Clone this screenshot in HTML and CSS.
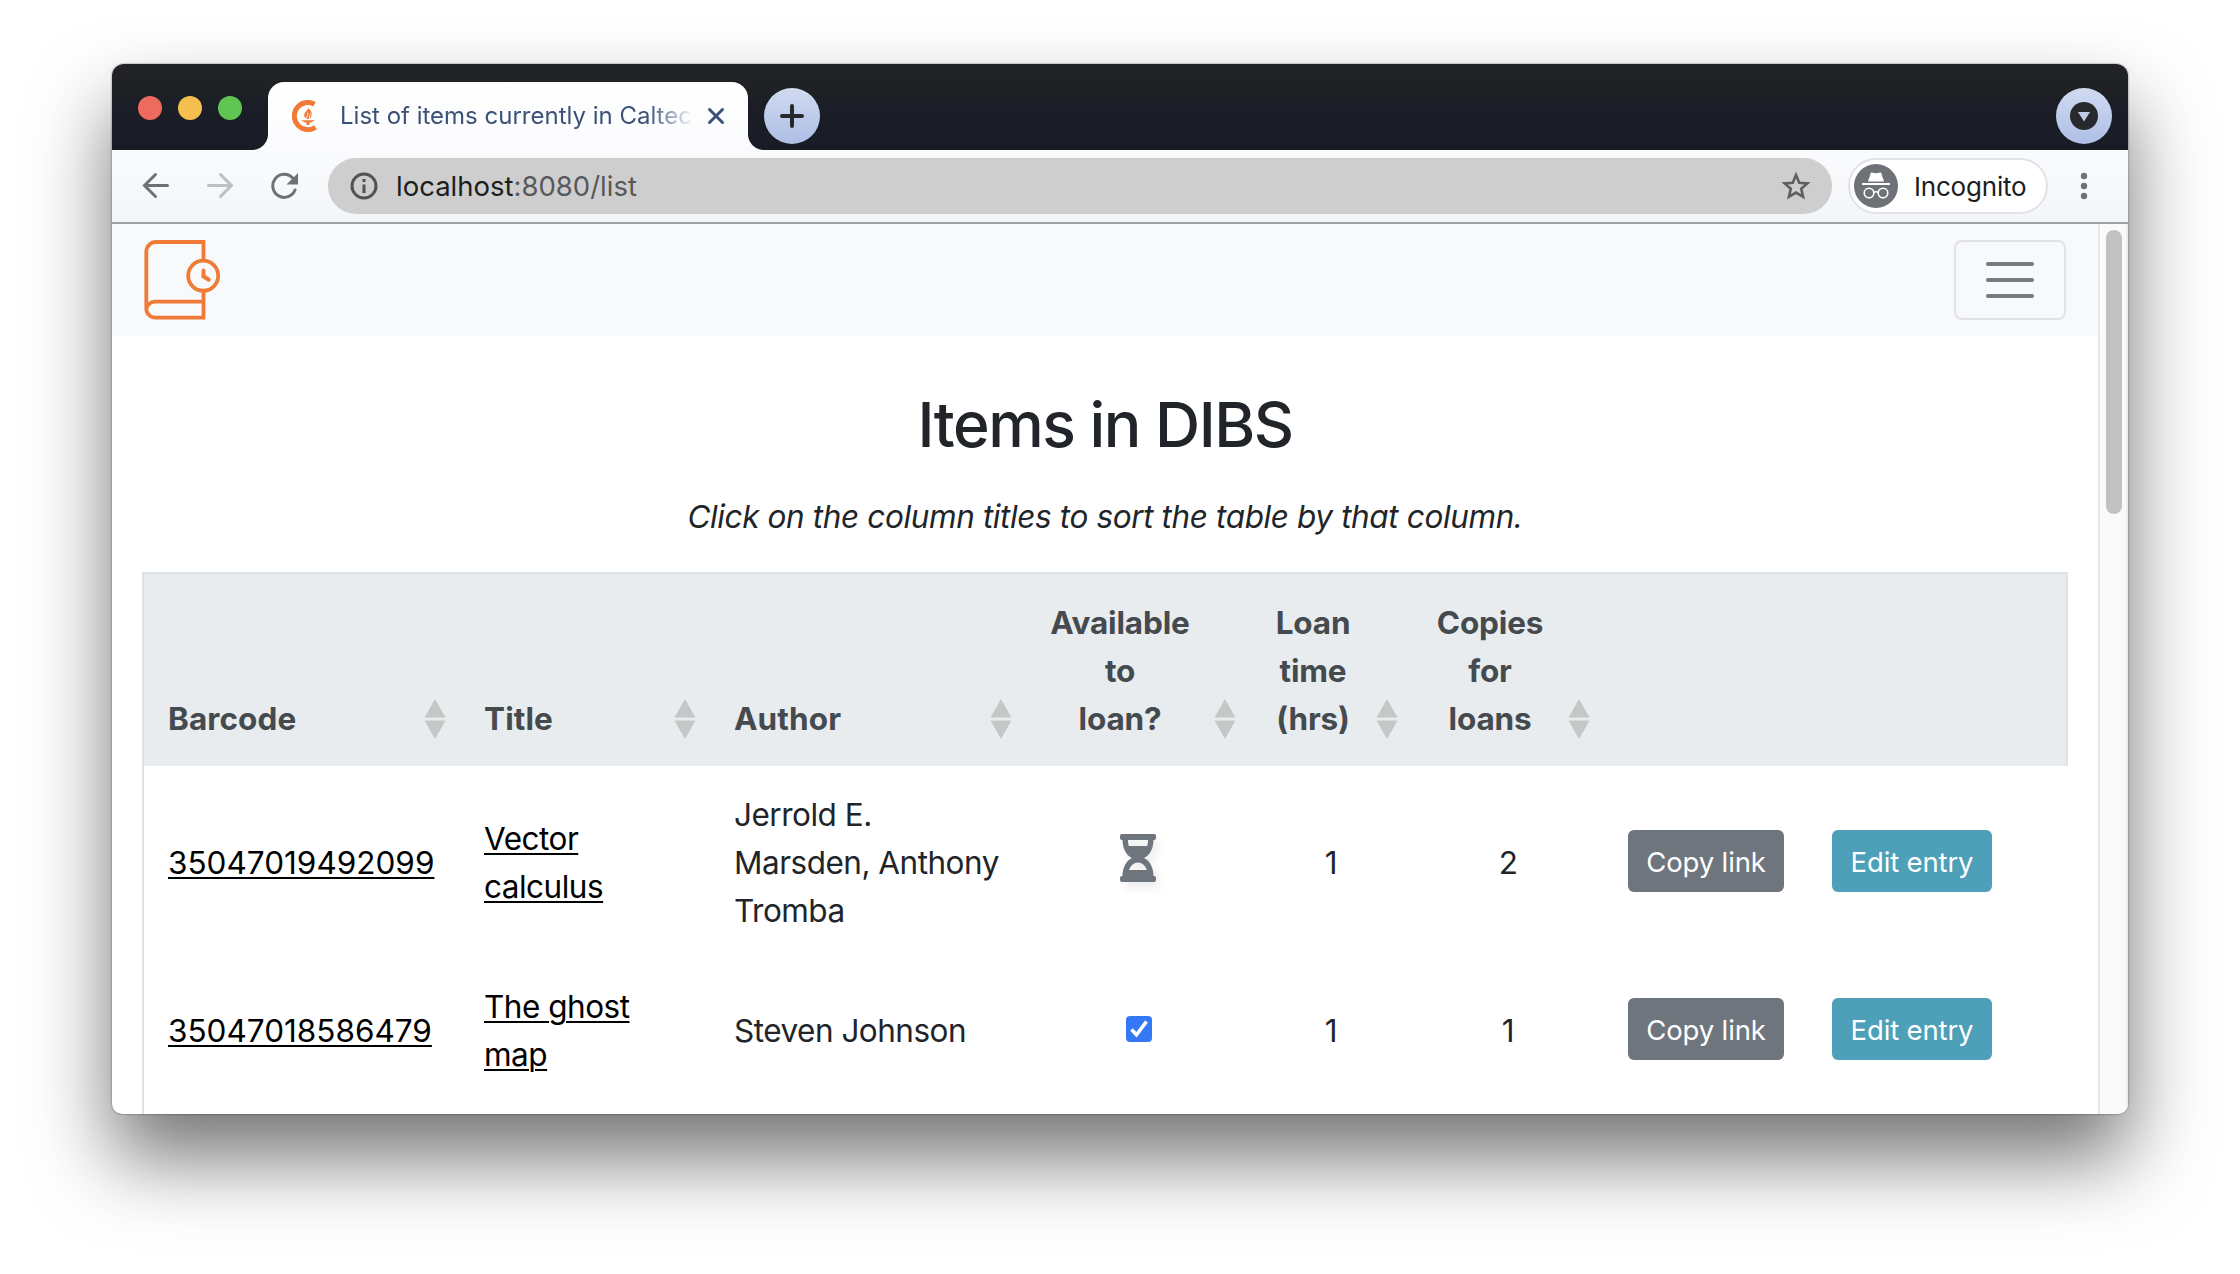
FILE: index.html
```html
<!DOCTYPE html>
<html lang="en">
<head>
<meta charset="utf-8">
<title>List of items currently in Caltech DIBS</title>
<link rel="stylesheet" href="styles.css">
</head>
<body>
<svg class="defs" width="0" height="0" aria-hidden="true">
  <symbol id="sort" viewBox="0 0 22 40"><path d="M11 0l10.500 18.500H.5zM11 40l10.500-18.500H.5z" fill="#c5c6c6"/></symbol>
</svg>
<div class="window">
  <div class="tabstrip">
    <div class="lights"><i class="red"></i><i class="yellow"></i><i class="green"></i></div>
    <div class="tab">
      <svg class="favicon" width="26" height="32" viewBox="0 0 26 32">
        <path d="M22.500 4.200A13.600 13.600 0 1 0 23.600 27.200" fill="none" stroke="#f07b37" stroke-width="5"/>
        <path d="M16.500 8c3.200 3 4 6 2.700 8.500-.8 1.500-1.700 2.200-3.200 2.700-3-.7-4.500-3-3.500-5.700.8-2 3-3 4-5.500z" fill="#f07b37"/>
        <path d="M9 20.300h14l-4 2.200h-1.500v2.500h-3v-2.500H13z" fill="#f07b37"/>
        <path d="M14.500 18.500l1.500-6M17 18.500l1.500-5" stroke="#fff" stroke-width=".8"/>
      </svg>
      <span class="tab-title">List of items currently in Caltec</span>
      <svg class="close" width="20" height="20" viewBox="0 0 20 20"><path d="M3.500 3.500l13 13M16.500 3.500l-13 13" stroke="#3c5178" stroke-width="3" stroke-linecap="round"/></svg>
    </div>
    <div class="round"><svg width="24" height="24" viewBox="0 0 24 24"><path d="M2 12h20M12 2v20" stroke="#28292c" stroke-width="4" stroke-linecap="round"/></svg></div>
    <div class="round last"><svg width="28" height="28" viewBox="0 0 28 28"><circle cx="14" cy="14" r="14" fill="#28292c"/><path d="M8 10h12l-6 9.500z" fill="#bfcbe8"/></svg></div>
  </div>
  <div class="toolbar">
    <svg class="nav-icon" width="28" height="28" viewBox="0 0 28 28"><path d="M25.500 13.500H3M13.500 2.500L2.500 13.500l11 11" fill="none" stroke="#6e7277" stroke-width="3" stroke-linecap="round"/></svg>
    <svg class="nav-icon" width="28" height="28" viewBox="0 0 28 28"><path d="M2.500 13.500h23M14.500 2.500l11 11-11 11" fill="none" stroke="#bcbfc3" stroke-width="3" stroke-linecap="round"/></svg>
    <svg class="nav-icon" width="28" height="28" viewBox="0 0 28 28"><path d="M22.500 5.800A11.500 11.500 0 1 0 25 18" fill="none" stroke="#6e7277" stroke-width="3" stroke-linecap="round"/><path d="M28 1v11.500H16.500z" fill="#6e7277"/></svg>
    <div class="omnibox">
      <svg width="28" height="28" viewBox="0 0 28 28"><circle cx="14" cy="14" r="12" fill="none" stroke="#525355" stroke-width="3"/><path d="M14 12.500V21M14 7v3" stroke="#525355" stroke-width="3"/></svg>
      <span class="url">localhost<span class="rest">:8080/list</span></span>
      <svg class="star" width="30" height="30" viewBox="0 0 30 30"><path d="M15 4l3.200 7.700 8.200.700-6.200 5.400 1.900 8.100-7.100-4.300-7.100 4.300 1.900-8.100-6.200-5.400 8.200-.7z" fill="none" stroke="#5f6062" stroke-width="2.600"/></svg>
    </div>
    <div class="incognito">
      <svg width="44" height="44" viewBox="0 0 44 44"><circle cx="22" cy="22" r="22" fill="#6e7277"/><path d="M14 17.500l2.700-8.300q.3-.9 1.300-.6 4 1.400 8 0 1-.3 1.300.6L30 17.500z" fill="#fff"/><path d="M8 20h28" stroke="#fff" stroke-width="1.800"/><g fill="none" stroke="#fff" stroke-width="1.600"><circle cx="15" cy="29" r="4.800"/><circle cx="29" cy="29" r="4.800"/><path d="M19.500 28.500q2.500-1.500 5 0"/></g></svg>
      <span class="inc">Incognito</span>
    </div>
    <svg class="kebab" width="8" height="28" viewBox="0 0 8 28"><g fill="#6e7277"><circle cx="4" cy="4" r="3.200"/><circle cx="4" cy="14" r="3.200"/><circle cx="4" cy="24" r="3.200"/></g></svg>
  </div>
  <div class="viewport">
    <div class="page">
      <nav class="navbar">
        <svg width="78" height="80" viewBox="0 0 78 80"><g fill="none" stroke="#f07b37" stroke-width="3.800"><path d="M59.500 20V2H12A9.700 9.700 0 0 0 2.300 11.700V68.500A9.200 9.200 0 0 0 11.500 77.700H59.500V51M2.300 70A8.500 8.500 0 0 1 10.800 61.700H59.500"/><circle cx="59.200" cy="35.700" r="15"/><path d="M59.500 30.500V36.300L64.800 39.700" stroke-width="4" stroke-linecap="round"/></g></svg>
        <div class="toggler"><i></i><i></i><i></i></div>
      </nav>
      <h1>Items in DIBS</h1>
      <p class="hint">Click on the column titles to sort the table by that column.</p>
      <div class="table-wrap">
        <table>
          <colgroup><col class="c1"><col class="c2"><col class="c3"><col class="c4"><col class="c5"><col class="c6"><col class="c7"><col class="c8"></colgroup>
          <thead>
            <tr>
              <th><div class="sort"><span>Barcode</span><svg width="22" height="40"><use href="#sort"/></svg></div></th>
              <th><div class="sort"><span>Title</span><svg width="22" height="40"><use href="#sort"/></svg></div></th>
              <th><div class="sort"><span>Author</span><svg width="22" height="40"><use href="#sort"/></svg></div></th>
              <th><div class="sort center"><span>Available<br>to<br>loan?</span><svg width="22" height="40"><use href="#sort"/></svg></div></th>
              <th><div class="sort center"><span>Loan<br>time<br>(hrs)</span><svg width="22" height="40"><use href="#sort"/></svg></div></th>
              <th><div class="sort center"><span>Copies<br>for<br>loans</span><svg width="22" height="40"><use href="#sort"/></svg></div></th>
              <th></th>
              <th></th>
            </tr>
          </thead>
          <tbody>
            <tr>
              <td class="code"><a>35047019492099</a></td>
              <td><a>Vector<br>calculus</a></td>
              <td>Jerrold E.<br>Marsden, Anthony<br>Tromba</td>
              <td class="mid"><svg class="hourglass" width="36" height="48" viewBox="0 0 36 48"><path fill="#6e757d" fill-rule="evenodd" d="M2 0h32a2 2 0 0 1 2 2v2a2 2 0 0 1-2 2h-.5c0 8-3.500 15.500-9.500 18 6 2.500 9.500 10 9.500 18h.5a2 2 0 0 1 2 2v2a2 2 0 0 1-2 2H2a2 2 0 0 1-2-2v-2a2 2 0 0 1 2-2h.5c0-8 3.500-15.500 9.500-18C6 21.500 2.500 14 2.500 6H2a2 2 0 0 1-2-2V2a2 2 0 0 1 2-2zM8 6c0 2.200.3 4.200.8 6h18.400c.5-1.800.8-3.800.8-6zM9 36h18c-1.700-4.500-5-7.500-9-7.500s-7.300 3-9 7.500z"/></svg></td>
              <td class="mid">1</td>
              <td class="mid">2</td>
              <td><span class="btn copy">Copy link</span></td>
              <td><span class="btn edit">Edit entry</span></td>
            </tr>
            <tr>
              <td class="code"><a>35047018586479</a></td>
              <td><a>The ghost<br>map</a></td>
              <td>Steven Johnson</td>
              <td class="mid"><svg class="check" width="26" height="26" viewBox="0 0 26 26"><rect width="26" height="26" rx="4" fill="#3478f6"/><path d="M5.500 13.500l5 5.300L20.500 5.500" fill="none" stroke="#fff" stroke-width="3.600"/></svg></td>
              <td class="mid">1</td>
              <td class="mid">1</td>
              <td><span class="btn copy">Copy link</span></td>
              <td><span class="btn edit">Edit entry</span></td>
            </tr>
          </tbody>
        </table>
      </div>
    </div>
    <div class="scrollbar"><i></i></div>
  </div>
</div>
</body>
</html>
```
FILE: styles.css
```css
* { box-sizing: border-box; }
body { margin: 0; height: 1274px; overflow: hidden; background: #fff; font-family: Inter, "Liberation Sans", sans-serif; color: #212529; padding: 64px 112px; }
svg { display: block; flex: none; }
.defs { position: absolute; }

/* window and tab strip */
.window { width: 2016px; height: 1050px; border-radius: 12px 12px 10px 10px; overflow: hidden; background: #fff; box-shadow: 0 0 2px rgba(0,0,0,.6), 0 44px 80px rgba(0,0,0,.55); display: flex; flex-direction: column; }
.tabstrip { height: 86px; background: linear-gradient(#212225, #1f2124 28%, #1b1e26 45%, #191c25); display: flex; align-items: flex-start; flex: none; }
.lights { display: flex; gap: 16px; padding: 32px 0 0 26px; width: 156px; }
.lights i { width: 24px; height: 24px; border-radius: 50%; }
.red { background: #ed6a5e; }
.yellow { background: #f5bf4f; }
.green { background: #61c554; }
.tab { position: relative; margin-top: 18px; width: 480px; height: 68px; border-radius: 16px 16px 0 0; background: linear-gradient(#fff, #fafbfd); display: flex; align-items: center; padding-left: 24px; }
.tab::before, .tab::after { content: ""; position: absolute; bottom: 0; width: 16px; height: 16px; }
.tab::before { left: -16px; background: radial-gradient(circle at 0 0, transparent 15.5px, #fafbfd 16.5px); }
.tab::after { right: -16px; background: radial-gradient(circle at 100% 0, transparent 15.5px, #fafbfd 16.5px); }
.tab-title { font-size: 24px; line-height: 30px; color: #3c5178; margin: 0 14px 0 22px; width: 352px; white-space: nowrap; overflow: hidden; -webkit-mask-image: linear-gradient(90deg, #000 308px, transparent 354px); mask-image: linear-gradient(90deg, #000 308px, transparent 354px); }
.round { width: 56px; height: 56px; border-radius: 50%; margin: 24px 0 0 16px; background: linear-gradient(#d0dbf1, #aebfe5); display: flex; align-items: center; justify-content: center; }
.last { margin-left: auto; margin-right: 16px; }

/* toolbar */
.toolbar { height: 74px; border-bottom: 2px solid #a0a1a3; background: linear-gradient(#fafbfd, #f3f6f9); display: flex; align-items: center; padding-left: 30px; flex: none; }
.nav-icon { margin-right: 36px; }
.omnibox { width: 1504px; height: 56px; border-radius: 28px; background: #cecece; margin-left: -6px; display: flex; align-items: center; padding: 0 21px 0 22px; }
.url { font-size: 27.5px; margin-left: 18px; color: #1c1d1f; white-space: nowrap; }
.rest { color: #57585a; }
.star { margin-left: auto; }
.incognito { margin-left: 16px; width: 200px; height: 56px; border: 2px solid #e0e2e5; border-radius: 28px; background: #fff; display: flex; align-items: center; padding-left: 4px; }
.inc { font-size: 26px; letter-spacing: -.2px; margin-left: 16px; color: #1c1d1f; }
.kebab { margin-left: 32px; }

/* page */
.viewport { flex: 1; display: flex; min-height: 0; }
.page { width: 1986px; overflow: hidden; flex: none; }
.scrollbar { flex: 1; background: #fafafa; border-left: 2px solid #e8e8e8; border-right: 2px solid #ededed; padding: 6px 0 0 6px; }
.scrollbar i { display: block; width: 16px; height: 284px; border-radius: 8px; background: #c1c1c1; }
.navbar { height: 112px; background: #f8f9fb; display: flex; justify-content: space-between; padding: 16px 32px; }
.toggler { width: 112px; height: 80px; border: 2px solid #e0e2e4; border-radius: 8px; padding: 20px 30px; display: flex; flex-direction: column; gap: 12px; }
.toggler i { height: 4px; border-radius: 2px; background: #7a7b7c; }
h1 { margin: 0; padding-top: 48px; font-weight: 500; font-size: 62.5px; letter-spacing: -1.5px; line-height: 80px; text-align: center; }
.hint { margin: 29px 0 0; font-style: italic; font-size: 31.5px; letter-spacing: -.38px; line-height: 48px; text-align: center; }

/* items table */
.table-wrap { margin: 31px 30px 0; border-left: 2px solid #dee2e6; border-top: 2px solid #dee2e6; height: 600px; }
table { width: 1924px; table-layout: fixed; border-collapse: collapse; font-size: 31.5px; letter-spacing: -.5px; line-height: 48px; }
th, td { padding: 25px 24px 23px; text-align: left; white-space: nowrap; }
th { vertical-align: bottom; color: #454a4e; font-weight: 670; letter-spacing: .1px; padding-right: 14px; }
th:last-child { box-shadow: inset -2px 0 #dee2e6; }
thead { background: #e8ecee; }
.sort { display: flex; align-items: flex-end; justify-content: space-between; }
.sort svg { margin-bottom: 4px; }
.center span { flex: 1; text-align: center; margin-right: 24px; letter-spacing: -.15px; }
.mid { text-align: center; }
.c1 { width: 316px; }
.c2 { width: 250px; }
.c3 { width: 316px; }
.c4 { width: 224px; }
.c5 { width: 162px; }
.c6 { width: 192px; }
.c7 { width: 204px; }
.c8 { width: 260px; }
a { color: #000; text-decoration: underline; text-decoration-thickness: 2px; text-underline-offset: 3px; }
.code { letter-spacing: 0; }
.hourglass { margin: 0 auto 10px; filter: drop-shadow(4px 6px 4px rgba(0,0,0,.07)); }
.check { margin: 0 auto 4px; position: relative; left: 1px; }
.btn { display: block; color: #fff; font-size: 27.5px; letter-spacing: -.15px; height: 62px; line-height: 64px; border-radius: 6px; margin-bottom: 4px; text-align: center; }
.copy { width: 156px; background: #6e757d; }
.edit { width: 160px; background: #4da0b7; }
```
